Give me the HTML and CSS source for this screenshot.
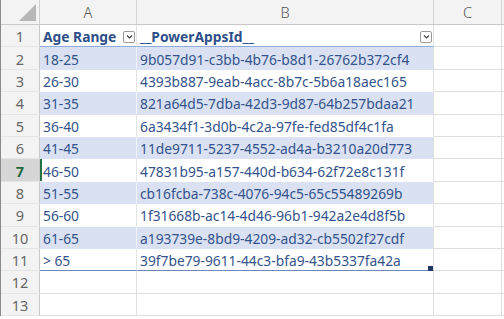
FILE: index.html
```html
<!DOCTYPE html>
<html>
<head>
<meta charset="utf-8">
<link rel="stylesheet" href="styles.css">
</head>
<body>
<div class="sheet">
  <div class="row colhead">
    <div class="corner"><span class="tri"></span></div>
    <div class="ch">A</div>
    <div class="ch">B</div>
    <div class="ch">C</div>
    <div class="ch last"></div>
  </div>
  <div class="row thead">
    <div class="rh">1</div>
    <div class="c a hdr"><span>Age Range</span><span class="dd"><svg width="9" height="6" viewBox="0 0 9 6"><path d="M2 1.5 L4.5 4 L7 1.5" fill="none" stroke="#444" stroke-width="1.2"/></svg></span></div>
    <div class="c b hdr"><span>__PowerAppsId__</span><span class="dd"><svg width="9" height="6" viewBox="0 0 9 6"><path d="M2 1.5 L4.5 4 L7 1.5" fill="none" stroke="#444" stroke-width="1.2"/></svg></span></div>
    <div class="c x"></div>
    <div class="c x last"></div>
  </div>
  <div class="row band">
    <div class="rh">2</div><div class="c a">18-25</div><div class="c b">9b057d91-c3bb-4b76-b8d1-26762b372cf4</div><div class="c x"></div><div class="c x last"></div>
  </div>
  <div class="row">
    <div class="rh">3</div><div class="c a">26-30</div><div class="c b">4393b887-9eab-4acc-8b7c-5b6a18aec165</div><div class="c x"></div><div class="c x last"></div>
  </div>
  <div class="row band">
    <div class="rh">4</div><div class="c a">31-35</div><div class="c b">821a64d5-7dba-42d3-9d87-64b257bdaa21</div><div class="c x"></div><div class="c x last"></div>
  </div>
  <div class="row">
    <div class="rh">5</div><div class="c a">36-40</div><div class="c b">6a3434f1-3d0b-4c2a-97fe-fed85df4c1fa</div><div class="c x"></div><div class="c x last"></div>
  </div>
  <div class="row band">
    <div class="rh">6</div><div class="c a">41-45</div><div class="c b">11de9711-5237-4552-ad4a-b3210a20d773</div><div class="c x"></div><div class="c x last"></div>
  </div>
  <div class="row">
    <div class="rh sel">7</div><div class="c a active">46-50</div><div class="c b">47831b95-a157-440d-b634-62f72e8c131f</div><div class="c x"></div><div class="c x last"></div>
  </div>
  <div class="row band">
    <div class="rh">8</div><div class="c a">51-55</div><div class="c b">cb16fcba-738c-4076-94c5-65c55489269b</div><div class="c x"></div><div class="c x last"></div>
  </div>
  <div class="row">
    <div class="rh">9</div><div class="c a">56-60</div><div class="c b">1f31668b-ac14-4d46-96b1-942a2e4d8f5b</div><div class="c x"></div><div class="c x last"></div>
  </div>
  <div class="row band">
    <div class="rh">10</div><div class="c a">61-65</div><div class="c b">a193739e-8bd9-4209-ad32-cb5502f27cdf</div><div class="c x"></div><div class="c x last"></div>
  </div>
  <div class="row tlast">
    <div class="rh">11</div><div class="c a">&gt; 65</div><div class="c b">39f7be79-9611-44c3-bfa9-43b5337fa42a<span class="handle"></span></div><div class="c x"></div><div class="c x last"></div>
  </div>
  <div class="row">
    <div class="rh">12</div><div class="c e"></div><div class="c e"></div><div class="c x"></div><div class="c x last"></div>
  </div>
  <div class="row">
    <div class="rh">13</div><div class="c e"></div><div class="c e"></div><div class="c x"></div><div class="c x last"></div>
  </div>
</div>
</body>
</html>
```

FILE: styles.css
```css
html, body {
  margin: 0;
  padding: 0;
  background: #ffffff;
}
body {
  font-family: "Noto Sans", "Open Sans", sans-serif;
  overflow: hidden;
}
.sheet {
  width: 504px;
  border-left: 1px solid #8a8a8a;
  box-sizing: border-box;
}
.row {
  display: grid;
  grid-template-columns: 39px 97px 297px 68px 2px;
  height: 22.4px;
}
.colhead {
  height: 25px;
  background: #f3f3f3;
  border-bottom: 1px solid #c9c9c9;
  box-sizing: border-box;
}
.corner {
  position: relative;
  border-right: 1px solid #d0d0d0;
}
.tri {
  position: absolute;
  right: 3px;
  bottom: 3px;
  width: 0;
  height: 0;
  border-left: 17px solid transparent;
  border-bottom: 17px solid #b7b7b7;
}
.ch {
  display: flex;
  align-items: center;
  justify-content: center;
  color: #555;
  font-size: 14.5px;
  font-weight: 300;
  border-right: 1px solid #d4d4d4;
}
.ch.last { border-right: none; }
.rh {
  background: #f3f3f3;
  color: #666;
  font-size: 14.5px;
  display: flex;
  align-items: center;
  justify-content: center;
  border-right: 1px solid #c9c9c9;
  border-bottom: 1px solid #e6e6e6;
  box-sizing: border-box;
  padding-top: 1px;
}
.rh.sel {
  background: #d6d6d6;
  color: #1e6b41;
  font-weight: 700;
}
.c {
  box-sizing: border-box;
  border-right: 1px solid #dedede;
  border-bottom: 1px solid #dedede;
  font-size: 13.8px;
  color: #34538c;
  display: flex;
  align-items: center;
  padding: 2px 3px 0 3px;
  white-space: nowrap;
  overflow: hidden;
  position: relative;
}
.c.last { border-right: none; }
.band .c.a, .band .c.b {
  background: #d9e1f2;
  border-bottom-color: #d9e1f2;
  border-right-color: #eef2f9;
}
.band .c.b { border-right-color: #dedede; }
.c.a, .c.b { border-bottom-color: #ffffff; }
.row:not(.band) .c.a { border-right-color: #e4e4e4; }
.thead .c.a, .thead .c.b {
  border-bottom: 1px solid #8ea9db;
  font-weight: 700;
  color: #2f4f8a;
  justify-content: space-between;
  padding-right: 1px;
}
.tlast .c.a, .tlast .c.b {
  border-bottom: 1px solid #6d87b8;
}
.dd {
  width: 12px;
  height: 12px;
  border: 1px solid #9a9a9a;
  border-radius: 2px;
  background: #fff;
  display: flex;
  align-items: center;
  justify-content: center;
  box-sizing: border-box;
}
.active {
  box-shadow: inset 2px 0 0 #217346;
}
.handle {
  position: absolute;
  right: 0;
  bottom: -1px;
  width: 5px;
  height: 5px;
  background: #1f3864;
}
.c.b { overflow: visible; }
```
